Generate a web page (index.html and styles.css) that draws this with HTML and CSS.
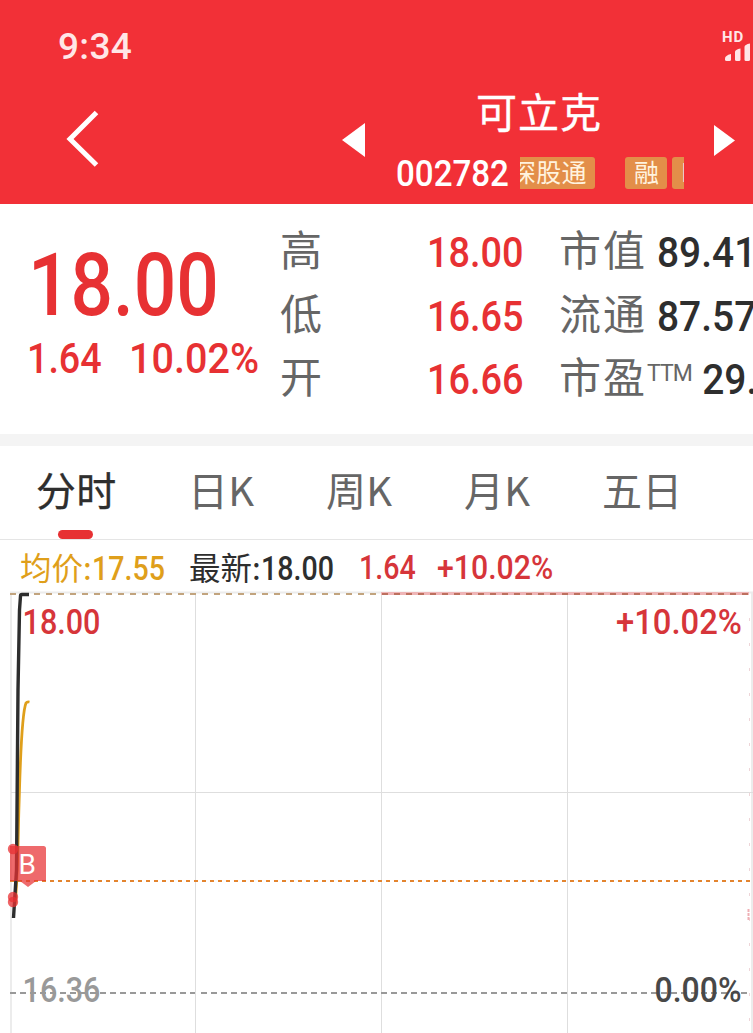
FILE: index.html
```html
<!DOCTYPE html>
<html lang="zh-CN">
<head>
<meta charset="utf-8">
<title>可立克 002782</title>
<link rel="stylesheet" href="styles.css">
</head>
<body>
<header class="header">
  <div class="status">
    <span class="time">9:34</span>
    <div class="signal">
      <span class="hd">HD</span>
      <svg width="28" height="18" viewBox="0 0 28 18" fill="#ffe6e7">
        <path d="M2 14.500q0-3 6-4.500v5.500q0 1.500-1.500 1.500h-3q-1.500 0-1.500-1.500z"/>
        <path d="M12 8q0-2.500 5.500-3.500v11q0 1.500-1.500 1.500h-2.500q-1.500 0-1.500-1.500z"/>
        <path d="M21.500 3q0-2.500 5.500-3.500v16q0 1.500-1.500 1.500h-2.500q-1.500 0-1.500-1.500z"/>
      </svg>
    </div>
  </div>
  <div class="nav">
    <svg class="back" width="40" height="62" viewBox="0 0 40 62"><path d="M33.500 4.500 7 31 33.500 57" fill="none" stroke="#fff" stroke-width="5"/></svg>
    <svg class="prev" width="24" height="36" viewBox="0 0 24 36"><path d="M0 18 23 1v34z" fill="#fff"/></svg>
    <div class="stock">
      <h1 class="name">可立克</h1>
      <div class="meta">
        <span class="code num">002782</span>
        <div class="tags"><span class="tag tag-wide">深股通</span><span class="tag">融</span><span class="tag tag-next">L</span></div>
      </div>
    </div>
    <svg class="next" width="24" height="36" viewBox="0 0 24 36"><path d="M21 16.500 0 1v31z" fill="#fff"/></svg>
  </div>
</header>

<section class="quote">
  <div class="last">
    <span class="price num">18.00</span>
    <div class="change"><span class="num">1.64</span><span class="num rate">10.02%</span></div>
  </div>
  <div class="stats">
    <span class="label">高</span><span class="val num">18.00</span><span class="label">市值</span><span class="dark num">89.41</span>
    <span class="label">低</span><span class="val num">16.65</span><span class="label">流通</span><span class="dark num">87.57</span>
    <span class="label">开</span><span class="val num">16.66</span><span class="label">市盈<sup class="ttm">TTM</sup></span><span class="dark pe num">29.</span>
  </div>
</section>

<nav class="tabs">
  <span class="tab active">分时</span><span class="tab">日K</span><span class="tab">周K</span><span class="tab">月K</span><span class="tab">五日</span>
</nav>

<div class="info">
  <span class="avg">均价:<span class="num">17.55</span></span>
  <span class="cur">最新:<span class="num">18.00</span></span>
  <span class="diff num">1.64</span>
  <span class="pct num">+10.02%</span>
</div>

<svg class="chart" width="753" height="445" viewBox="0 588 753 445">
  <g fill="none">
    <path d="M10 592.500H753" stroke="#ececec" stroke-width="2"/>
    <path d="M11 592V1033M752 592V1033" stroke="#ececec" stroke-width="2"/>
    <path d="M195.500 595V1033M381.500 595V1033M567.500 595V1033M11 792.500H753" stroke="#dedede"/>
    <path d="M381 593.500H749" stroke="#efb5b7" stroke-width="3"/>
    <path d="M10 594H381" stroke="#c2a47e" stroke-width="2" stroke-dasharray="6 6"/>
    <path d="M382 594H749" stroke="#bd705e" stroke-width="2" stroke-dasharray="6 6"/>
    <path d="M749.500 618V1033" stroke="#eed5d8" stroke-dasharray="3 22"/>
    <path d="M748.500 909V920" stroke="#efb0b5" stroke-width="2" stroke-dasharray="3 1"/>
    <path d="M10 881H750" stroke="#e3842f" stroke-width="2" stroke-dasharray="4 4"/>
    <path d="M15 905C18 875 18 835 19 805C20 775 21 715 26 703Q27 701.500 29.500 702" stroke="#df9f1b" stroke-width="2.800"/>
    <path d="M13.500 918 16.500 870 18 690 19.500 610 20.500 596Q20.500 594.500 22 594.500H29" stroke="#2d2d2d" stroke-width="3.400"/>
  </g>
  <g fill="#e83033" fill-opacity=".75">
    <circle cx="13" cy="849" r="5.200"/><circle cx="13" cy="897" r="5.200"/><circle cx="13" cy="902" r="5.200"/>
    <path d="M10 846H43.500Q46 846 46 848.500V881H36L28 887 20 881H10Z" fill-opacity=".72"/>
  </g>
  <path d="M10 993H195M201 993H750" stroke="#999" stroke-width="1.800" stroke-dasharray="6 4"/>
  <text class="b" x="18.500" y="874">B</text>
  <text class="axis up" x="22.500" y="634" textLength="78" lengthAdjust="spacingAndGlyphs">18.00</text>
  <text class="axis up" x="616" y="634" textLength="126" lengthAdjust="spacingAndGlyphs">+10.02%</text>
  <text class="axis base" x="22.500" y="1002" textLength="78" lengthAdjust="spacingAndGlyphs">16.36</text>
  <text class="axis zero" x="654.500" y="1002" textLength="87" lengthAdjust="spacingAndGlyphs">0.00%</text>
</svg>
</body>
</html>
```
FILE: styles.css
```css
* { box-sizing: border-box; }
body {
  margin: 0;
  width: 753px;
  height: 1033px;
  overflow: hidden;
  background: #fff;
  font-family: Roboto, "Noto Sans CJK SC", sans-serif;
}
svg { display: block; flex: none; }
.num {
  display: inline-block;
  font-family: Roboto, sans-serif;
  font-weight: 500;
  white-space: nowrap;
  transform-origin: 0 50%;
}

.header { height: 204px; background: #f23037; color: #fff; overflow: hidden; }
.status {
  height: 88px;
  padding: 26px 0 0 58px;
  display: flex;
  justify-content: space-between;
  color: #ffe6e7;
}
.time { font-size: 37px; line-height: 41px; font-weight: 500; letter-spacing: .3px; }
.signal { width: 31px; padding-top: 5px; }
.hd { display: block; font: 700 15px/13px Roboto, sans-serif; letter-spacing: .8px; }
.signal svg { margin: 0 0 0 1px; overflow: visible; }
.nav { display: flex; height: 116px; }
.back { margin: 20px 0 0 63px; }
.prev { margin: 34px 0 0 239px; }
.stock { width: 318px; margin-left: 30px; }
.name {
  margin: -3px 0 3px;
  padding-left: 80px;
  font: 400 41px/50px "Noto Sans CJK SC", sans-serif;
  letter-spacing: 1px;
  -webkit-text-stroke: .4px #fff;
}
.meta { display: flex; height: 66px; }
.code { flex: none; width: 124px; font-size: 36px; line-height: 72px; transform: scaleX(.92); }
.tags { display: flex; width: 164px; height: 32px; margin-top: 19px; overflow: hidden; }
.tag {
  flex: none;
  height: 32px;
  margin-right: 5px;
  padding: 0 8px 0 9px;
  border-radius: 3px;
  background: #e38e49;
  color: #fff3df;
  font: 400 25px/29px "Noto Sans CJK SC", sans-serif;
}
.tag-wide { margin: 0 30px 0 -18px; letter-spacing: .3px; }
.next { margin: 36px 0 0 0; }

.quote { display: flex; height: 230px; overflow: hidden; color: #e73133; }
.last { flex: none; width: 280px; padding: 30px 0 0 27px; }
.price { height: 101px; margin-left: 1px; font-size: 87px; line-height: 102px; transform: scaleX(.86); }
.change { display: flex; font-size: 43px; line-height: 46px; }
.change .num { width: 102px; transform: scaleX(.875); }
.change .rate { transform: scaleX(.92); }
.stats {
  flex: none;
  display: grid;
  grid-template-columns: 147px 132px 97px 150px;
  grid-auto-rows: 63.500px;
  padding-top: 17px;
  line-height: 63px;
}
.label {
  margin-top: -5px;
  font-family: "Noto Sans CJK SC", sans-serif;
  font-size: 42px;
  letter-spacing: 2px;
  color: #666;
  white-space: nowrap;
}
.val, .dark { font-size: 43px; transform: scaleX(.88); }
.dark { color: #2e2e2e; transform: translateX(1px) scaleX(.905); }
.ttm { display: inline-block; width: 46px; font: 400 23px/1 Roboto, sans-serif; letter-spacing: -1px; vertical-align: 12px; }
.pe { padding-left: 50px; }

.tabs {
  display: flex;
  height: 106px;
  border-top: 12px solid #f4f4f4;
  border-bottom: 1px solid #e5e5e5;
  padding-left: 36px;
  color: #666;
  font: 400 40px/86px "Noto Sans CJK SC", sans-serif;
}
.tab { width: 138px; letter-spacing: .3px; }
.tab:first-child { width: 152px; }
.active { position: relative; color: #2e2e2e; -webkit-text-stroke: .3px #2e2e2e; }
.active::after {
  content: "";
  position: absolute;
  left: 22px;
  bottom: 0;
  width: 35px;
  height: 9px;
  border-radius: 5px;
  background: #e73133;
}

.info {
  display: flex;
  height: 48px;
  padding-left: 20px;
  font: 400 31.500px/53px "Noto Sans CJK SC", sans-serif;
  white-space: nowrap;
  color: #d6353a;
}
.info .num { font-size: 32.500px; transform: scaleX(.88); }
.info > span { flex: none; }
.avg { width: 169px; color: #df9f1b; }
.cur { width: 170px; color: #2e2e2e; }
.info .diff { width: 78px; line-height: 57px; }
.info .pct { line-height: 57px; transform: scaleX(.93); }

.axis { font: 500 35px Roboto, sans-serif; }
.up { fill: #d6353a; }
.base { fill: #999; }
.zero { fill: #484848; }
.b { font: 400 28px Roboto, sans-serif; fill: #fff; }
```
